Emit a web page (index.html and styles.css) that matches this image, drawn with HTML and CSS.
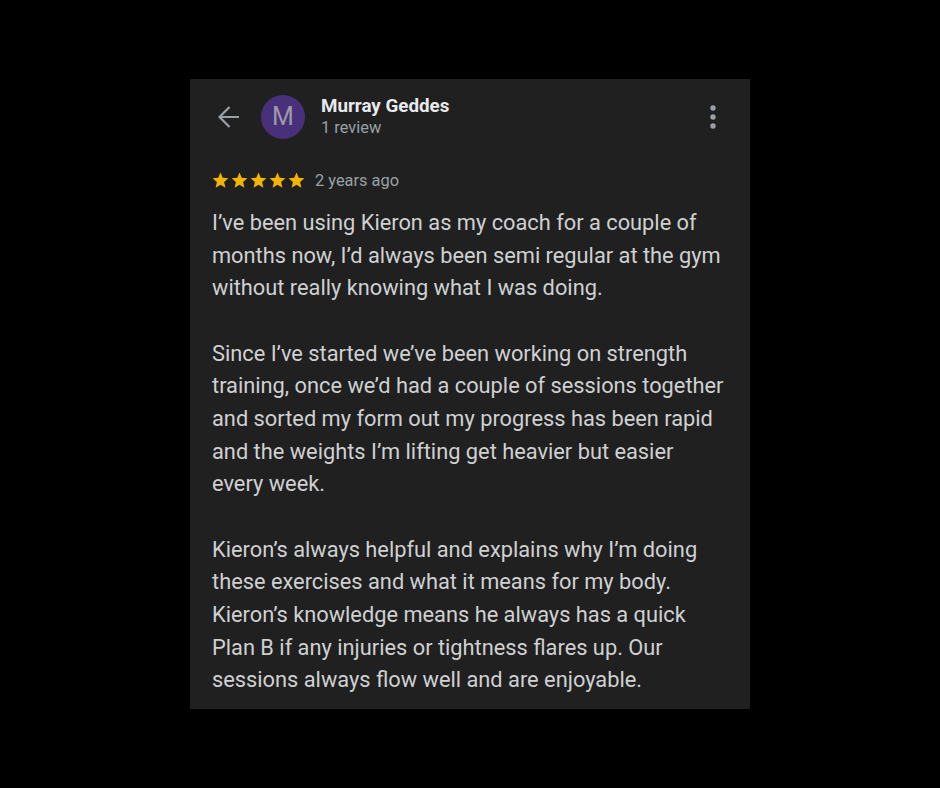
FILE: index.html
```html
<!DOCTYPE html>
<html lang="en">

<head>
    <meta charset="UTF-8">
    <meta name="viewport" content="width=device-width, initial-scale=1.0">
    <title>Review</title>
    <link rel="stylesheet" href="styles.css">
</head>

<body>
    <div class="review_card">
        <div class="review_head">
            <svg class="back_arrow" width="22" height="22" viewBox="0 0 22 22">
                <path d="M1.5 11H21M11.5 1L1.5 11l10 10" fill="none" stroke="#9aa0a6" stroke-width="2.2"></path>
            </svg>
            <div class="avatar">M</div>
            <div class="author">
                <div class="author_name">Murray Geddes</div>
                <div class="author_meta">1 review</div>
            </div>
            <svg class="more_btn" width="8" height="26" viewBox="0 0 8 26">
                <circle cx="4" cy="4" r="2.7" fill="#9aa0a6"></circle>
                <circle cx="4" cy="13" r="2.7" fill="#9aa0a6"></circle>
                <circle cx="4" cy="22" r="2.7" fill="#9aa0a6"></circle>
            </svg>
        </div>

        <div class="rating_row">
            <div class="stars">
                <svg width="19" height="19" viewBox="0 0 24 24"><path d="M12 17.27L18.18 21l-1.64-7.03L22 9.24l-7.19-.61L12 2 9.19 8.63 2 9.24l5.46 4.73L5.82 21z" fill="#f4b406"></path></svg>
                <svg width="19" height="19" viewBox="0 0 24 24"><path d="M12 17.27L18.18 21l-1.64-7.03L22 9.24l-7.19-.61L12 2 9.19 8.63 2 9.24l5.46 4.73L5.82 21z" fill="#f4b406"></path></svg>
                <svg width="19" height="19" viewBox="0 0 24 24"><path d="M12 17.27L18.18 21l-1.64-7.03L22 9.24l-7.19-.61L12 2 9.19 8.63 2 9.24l5.46 4.73L5.82 21z" fill="#f4b406"></path></svg>
                <svg width="19" height="19" viewBox="0 0 24 24"><path d="M12 17.27L18.18 21l-1.64-7.03L22 9.24l-7.19-.61L12 2 9.19 8.63 2 9.24l5.46 4.73L5.82 21z" fill="#f4b406"></path></svg>
                <svg width="19" height="19" viewBox="0 0 24 24"><path d="M12 17.27L18.18 21l-1.64-7.03L22 9.24l-7.19-.61L12 2 9.19 8.63 2 9.24l5.46 4.73L5.82 21z" fill="#f4b406"></path></svg>
            </div>
            <span class="review_date">2 years ago</span>
        </div>

        <div class="review_text">
            <p>I’ve been using Kieron as my coach for a couple of months now, I’d always been semi regular at the gym without really knowing what I was doing.</p>
            <p>Since I’ve started we’ve been working on strength training, once we’d had a couple of sessions together and sorted my form out my progress has been rapid and the weights I’m lifting get heavier but easier every week.</p>
            <p>Kieron’s always helpful and explains why I’m doing these exercises and what it means for my body. Kieron’s knowledge means he always has a quick Plan B if any injuries or tightness flares up. Our sessions always flow well and are enjoyable.</p>
        </div>
    </div>
</body>

</html>
```

FILE: styles.css
```css
* {
    margin: 0;
    padding: 0;
    box-sizing: border-box;
}

body {
    background-color: #000;
    font-family: Roboto, "Liberation Sans", sans-serif;
    padding-top: 79px;
}

.review_card {
    width: 560px;
    height: 630px;
    margin: 0 auto;
    background-color: #202020;
    padding: 16px 22px 0 22px;
    overflow: hidden;
}

.review_head {
    display: flex;
    align-items: center;
    height: 44px;
}

.back_arrow {
    margin-left: 6px;
    margin-right: 21px;
}

.avatar {
    width: 44px;
    height: 44px;
    border-radius: 50%;
    background-color: #49307a;
    color: #9d99a9;
    font-size: 25px;
    line-height: 44px;
    text-align: center;
    margin-right: 16px;
}

.author {
    flex: 1;
    margin-top: -2px;
}

.author_name {
    color: #e8eaed;
    font-size: 18.8px;
    font-weight: 700;
    line-height: 22px;
}

.author_meta {
    color: #9aa0a6;
    font-size: 16.4px;
    line-height: 21px;
}

.more_btn {
    margin-top: -1px;
    margin-right: 11px;
}

.rating_row {
    display: flex;
    align-items: center;
    margin-top: 31px;
    height: 20px;
}

.stars {
    display: flex;
    margin-left: -1px;
}

.stars svg {
    display: block;
}

.review_date {
    margin-left: 9px;
    color: #9aa0a6;
    font-size: 16.4px;
}

.review_text {
    margin-top: 17px;
    color: #cfd0d2;
    font-size: 21.8px;
    line-height: 32.65px;
}

.review_text p {
    margin-bottom: 32.65px;
}
```
